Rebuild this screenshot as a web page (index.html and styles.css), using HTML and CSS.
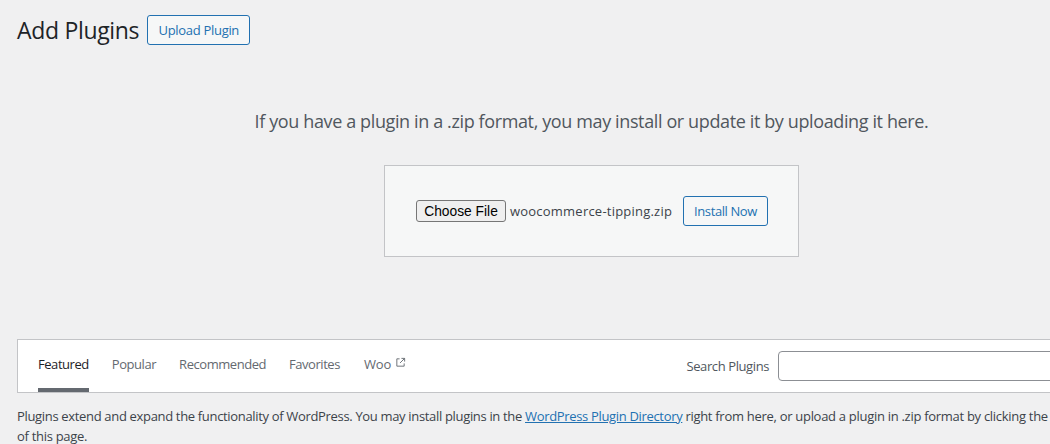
FILE: index.html
```html
<!DOCTYPE html>
<html lang="en">
<head>
<meta charset="utf-8">
<title>Add Plugins</title>
<link rel="stylesheet" href="styles.css">
</head>
<body>
<div class="page">
  <header class="head">
    <h1>Add Plugins</h1>
    <a class="btn" href="#">Upload Plugin</a>
  </header>
  <section class="upload">
    <p class="help">If you have a plugin in a .zip format, you may install or update it by uploading it here.</p>
    <form class="box">
      <button class="choose" type="button">Choose File</button>
      <span class="fname">woocommerce-tipping.zip</span>
      <a class="btn install" href="#">Install Now</a>
    </form>
  </section>
  <nav class="filter">
    <ul class="tabs">
      <li class="tab current">Featured</li>
      <li class="tab">Popular</li>
      <li class="tab">Recommended</li>
      <li class="tab">Favorites</li>
      <li class="tab woo">Woo <svg class="ext" viewBox="0 0 12 12" width="11" height="11"><path d="M5 2H2v8h8V7M7 1.5h3.5V5M10.5 1.5 5.5 6.5" fill="none" stroke="#646970" stroke-width="1"/></svg></li>
    </ul>
    <div class="search">
      <label for="s">Search Plugins</label>
      <input id="s" type="search">
    </div>
  </nav>
  <p class="note">Plugins extend and expand the functionality of WordPress. You may install plugins in the <a href="#">WordPress Plugin Directory</a> <span class="rest">right from here, or upload a plugin in .zip format by clicking the button at the top of this page.</span></p>
</div>
</body>
</html>
```
FILE: styles.css
```css
html, body { margin: 0; padding: 0; height: 444px; overflow: hidden; background: #f0f0f1; }
body { font-family: "Open Sans", "Noto Sans", sans-serif; font-size: 13px; color: #3c434a; }
.page { width: 1166px; padding: 15px 0 0 17px; box-sizing: border-box; }
.head { display: flex; align-items: center; gap: 8px; height: 30px; }
h1 { margin: 0; font-size: 23px; font-weight: 400; color: #1d2327; letter-spacing: -0.32px; }
.btn { display: inline-flex; align-items: center; justify-content: center; box-sizing: border-box; height: 30px; border: 1px solid #2271b1; border-radius: 3px; background: #f6f7f7; color: #2271b1; text-decoration: none; font-size: 13px; letter-spacing: -0.3px; }
.head .btn { width: 103px; }
.help { margin: 64px 0 0; text-align: center; font-size: 18px; line-height: 24px; color: #50575e; letter-spacing: -0.38px; }
.box { box-sizing: border-box; width: 415px; height: 92px; margin: 32px auto 0; border: 1px solid #c3c4c7; background: #f6f7f7; display: flex; align-items: center; padding-left: 31px; }
.choose { box-sizing: border-box; width: 90px; height: 22px; padding: 0; background: #efefef; border: 1px solid #767676; border-radius: 3px; font: 13.8px "Liberation Sans", Arial, sans-serif; color: #000; }
.fname { margin-left: 4px; width: 173px; font-size: 13px; letter-spacing: 0.22px; color: #3c434a; white-space: nowrap; }
.install { width: 85px; letter-spacing: -0.4px; }
.filter { box-sizing: border-box; height: 54px; margin-top: 82px; background: #fff; border: 1px solid #c3c4c7; display: flex; justify-content: space-between; padding-left: 20px; }
.tabs { display: flex; gap: 23px; margin: 0; padding: 0; list-style: none; }
.tab { box-sizing: border-box; height: 52px; padding-top: 14px; line-height: 20px; color: #646970; letter-spacing: -0.45px; white-space: nowrap; }
.tab.current { color: #1d2327; border-bottom: 4px solid #646970; }
.woo { margin-left: 1px; letter-spacing: -0.2px; }
.ext { vertical-align: 1px; margin-left: 1px; }
.search { display: flex; align-items: flex-start; gap: 9px; padding-top: 11px; }
.search label { line-height: 30px; color: #50575e; letter-spacing: -0.4px; }
#s { box-sizing: border-box; width: 371px; height: 30px; margin: 0 16px 0 0; border: 1px solid #8c8f94; border-radius: 4px; background: #fff; }
.note { margin: 13px 0 0; padding-right: 12px; line-height: 20px; letter-spacing: -0.33px; color: #3c434a; }
.note a { color: #2271b1; }
.rest { letter-spacing: -0.29px; }
```
